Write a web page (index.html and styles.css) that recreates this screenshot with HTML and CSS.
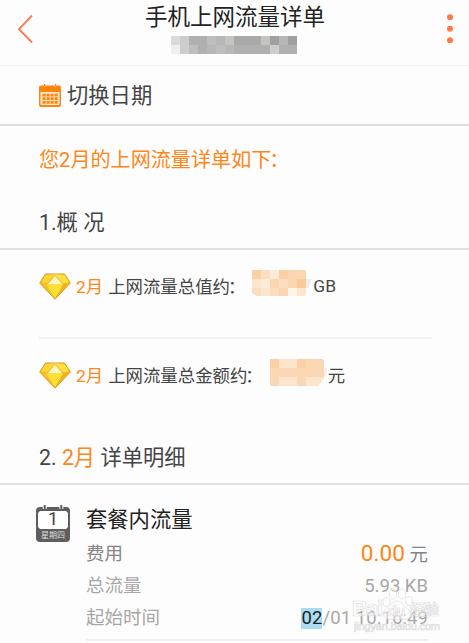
FILE: index.html
```html
<!DOCTYPE html>
<html lang="zh-CN">
<head>
  <meta charset="UTF-8">
  <title>手机上网流量详单</title>
  <link rel="stylesheet" href="styles.css">
</head>
<body>
  <header class="topbar">
    <svg class="back" width="18" height="32" viewBox="0 0 18 32"><path d="M15 2.5 2 16.2 15 29.5" fill="none" stroke="#ff7950" stroke-width="1.9"/></svg>
    <div class="heading">
      <h1>手机上网流量详单</h1>
      <svg class="phone" width="126" height="18" viewBox="0 0 14 2" shape-rendering="crispEdges">
        <path fill="#b0b0b0" d="M0 0h14v2H0z"/>
        <path fill="#dadada" d="M0 0h1v1H0z"/><path fill="#efefef" d="M0 1h1v1H0z"/>
        <path fill="#cdcdcd" d="M1 0h1v2H1zM11 1h1v1h-1z"/>
        <path fill="#bebebe" d="M2 1h1v1H2zM4 0h1v1H4zM5 1h1v1H5z"/>
        <path fill="#c4c4c1" d="M6 0h1v1H6zM10 0h1v1h-1z"/>
        <path fill="#b7b7b7" d="M5 0h1v1H5zM4 1h1v1H4zM6 1h1v1H6zM12 0h1v1h-1z"/>
        <path fill="#a9a9a9" d="M7 0h3v1H7z"/>
        <path fill="#a0a09f" d="M11 0h1v1h-1zM13 0h1v1h-1z"/>
      </svg>
    </div>
    <svg class="more" width="6" height="30" viewBox="0 0 6 30" fill="#ff7a45"><circle cx="3" cy="3.3" r="3"/><circle cx="3" cy="14.7" r="3"/><circle cx="3" cy="26.3" r="3"/></svg>
  </header>

  <div class="switch">
    <svg width="22" height="23" viewBox="0 0 22 23">
      <path d="M2 1.5h2.5Q5.7 3.5 7 1.5h8q1.3 2 2.5 0H20a2 2 0 0 1 2 2V21a2 2 0 0 1-2 2H2a2 2 0 0 1-2-2V3.5a2 2 0 0 1 2-2z" fill="#ff850d"/>
      <path d="M5.7 0v2M16.500 0v2" stroke="#ff850d" stroke-width="1.4"/>
      <path d="M1.500 8h19V20a1 1 0 0 1-1 1h-17a1 1 0 0 1-1-1z" fill="#ffe9d0"/>
      <path d="M3.500 11.100h15.300M3.500 14.700h15.300M3.500 18.300h15.300" stroke="#ff850d" stroke-width="2.7" stroke-dasharray="3.2 .8"/>
    </svg>
    <span>切换日期</span>
  </div>

  <p class="notice">您2月的上网流量详单如下<span class="colon">：</span></p>
  <h2 class="overview">1.概 况</h2>

  <div class="summary">
    <div class="item">
      <svg class="gem" width="32" height="27" viewBox="0 0 32 27">
        <path d="M6.500 1h19L31.300 10 16 26.200.700 10z" fill="#f5bf25" stroke="#d99b1c"/>
        <path d="M7 2h18L16 1.500z" fill="#fff09a"/>
        <path d="M6.500 2 2 9.500 8 10 16 2z" fill="#fbd535"/>
        <path d="M25.500 2 30 9.500 24 10 16 2z" fill="#ffe13f"/>
        <path d="M16 3 8.500 11.500h15z" fill="#fff7c2"/>
        <path d="M7 11.500h18L16 25z" fill="#ffe033"/>
        <path d="M24.500 11 30 10 16 25.500z" fill="#efae24"/>
      </svg>
      <b>2月</b><span>上网流量总值约<span class="colon">：</span></span>
      <svg class="hidden-value" width="60" height="26" viewBox="0 0 60 26" shape-rendering="crispEdges">
        <path d="M54 9h6l-3 9h-3z" fill="#eee"/>
        <path d="M0 0h54v24l-2 2H7q-5 0-7-4z" fill="#fbdec0"/>
        <path d="M0 0h9v9H0zM27 0h9v9h-9z" fill="#fbd0a3"/>
        <path d="M18 0h9v9h-9zM9 9h9v9H9z" fill="#fdebd9"/>
        <path d="M45 9h9v9h-9z" fill="#facb96"/>
        <path d="M18 9h9v9h-9zM36 9h9v9h-9zM27 18h9v8h-9zM36 0h18v9H36z" fill="#fbd7b1"/>
        <path d="M36 18h9v8h-9z" fill="#fff4e7"/><path d="M45 18h9v6l-2 2h-7zM9 18h9v8H9zM0 9h9v9H0z" fill="#fce6cf"/>
      </svg>
      <span>GB</span>
    </div>
    <div class="item">
      <svg class="gem" width="32" height="27" viewBox="0 0 32 27">
        <path d="M6.500 1h19L31.300 10 16 26.200.700 10z" fill="#f5bf25" stroke="#d99b1c"/>
        <path d="M7 2h18L16 1.500z" fill="#fff09a"/>
        <path d="M6.500 2 2 9.500 8 10 16 2z" fill="#fbd535"/>
        <path d="M25.500 2 30 9.500 24 10 16 2z" fill="#ffe13f"/>
        <path d="M16 3 8.500 11.500h15z" fill="#fff7c2"/>
        <path d="M7 11.500h18L16 25z" fill="#ffe033"/>
        <path d="M24.500 11 30 10 16 25.500z" fill="#efae24"/>
      </svg>
      <b>2月</b><span>上网流量总金额约<span class="colon">：</span></span>
      <svg class="hidden-value" width="57" height="27" viewBox="0 0 57 27" shape-rendering="crispEdges">
        <path d="M54 9h3l-1 8h-2z" fill="#eee"/>
        <path d="M0 0h52l2 2v17l-6 8H0z" fill="#fbd7b3"/>
        <path d="M0 0h9v9H0zM27 0h9v9h-9z" fill="#fbd0a2"/>
        <path d="M9 0h18v9H9zM9 18h18v9H9zM36 18h18v1l-6 8H36z" fill="#fce5cc"/>
      </svg>
      <span>元</span>
    </div>
  </div>

  <h2 class="detail-title">2. <b>2月</b> 详单明细</h2>

  <section class="detail">
    <svg class="day" width="34" height="37" viewBox="0 0 34 37">
      <rect y="2" width="34" height="35" rx="4" fill="#5e5e5e"/>
      <path d="M4 6h26l2 2v14l-2 2H4l-2-2V8z" fill="#fff"/>
      <path d="M8.700 1v3M25.300 1v3" stroke="#fff" stroke-width="4"/>
      <path d="M8.700 0v4.500M25.300 0v4.500" stroke="#5e5e5e" stroke-width="2"/>
      <text x="17" y="20" class="day-number">1</text>
      <text x="17" y="33" class="day-name">星期四</text>
    </svg>
    <div class="record">
      <h3>套餐内流量</h3>
      <div class="line cost"><span>费用</span><span><b>0.00</b> 元</span></div>
      <div class="line"><span>总流量</span><span>5.93 KB</span></div>
      <div class="line"><span>起始时间</span><span class="time"><mark>02</mark>/01 10:16:49</span></div>
    </div>
  </section>

  <svg class="watermark" width="94" height="46" viewBox="0 0 94 46">
    <g fill="#fff" fill-opacity=".5" stroke="#ddd" stroke-width=".7">
      <text x="2" y="28" class="brand" textLength="31">Bai</text>
      <ellipse cx="36.500" cy="14" rx="3.500" ry="4.500"/><ellipse cx="43" cy="6" rx="3.700" ry="5"/><ellipse cx="52" cy="6" rx="3.700" ry="5"/><ellipse cx="59" cy="13" rx="3.500" ry="4.500"/>
      <path d="M47 13c-5 0-7 6-12 9-4 4-1 9 4 9h17c5 0 7-5 3-9-5-3-7-9-12-9z"/>
      <text x="38" y="28" class="du">du</text>
      <text x="60" y="27" class="brand-cn" textLength="29">经验</text>
      <text x="4" y="42" class="site" textLength="86">jingyan.baidu.com</text>
    </g>
  </svg>
</body>
</html>
```
FILE: styles.css
```css
* {
  box-sizing: border-box;
}
body {
  margin: 0;
  height: 643px;
  overflow: hidden;
  position: relative;
  background: #fdfdfd;
  color: #444;
  font-family: Roboto, "Noto Sans CJK SC", sans-serif;
}
h1, h2, h3, p {
  margin: 0;
  font-weight: 400;
}
b {
  font-weight: 400;
  color: #ff8617;
}
svg {
  display: block;
  flex: none;
}
.topbar {
  height: 66px;
  display: flex;
  padding: 0 16px 0 17px;
  border-bottom: 1px solid #eee;
}
.back {
  margin-top: 13px;
}
.more {
  margin: 14px 0 0 auto;
}
.heading {
  width: 180px;
  margin-left: 110px;
}
h1 {
  height: 36px;
  line-height: 34px;
  font-size: 22.5px;
  color: #222;
  white-space: nowrap;
}
.phone {
  margin-left: 26px;
}
.switch {
  height: 60px;
  display: flex;
  align-items: center;
  gap: 6px;
  padding: 0 0 4px 39px;
  border-bottom: 2px solid #dedede;
  font-size: 21.3px;
}
.switch svg {
  margin-top: 4px;
}
.notice {
  height: 68px;
  line-height: 69px;
  padding-left: 39px;
  color: #ff8617;
  font-size: 20.1px;
}
.colon {
  display: inline-block;
  text-indent: -2px;
}
h2 {
  padding-left: 39px;
  font-size: 21.3px;
  border-bottom: 2px solid #e0e0e0;
}
.overview {
  height: 56px;
  line-height: 57px;
}
.summary {
  padding: 0 37px 0 39px;
}
.item {
  height: 89px;
  display: flex;
  align-items: center;
  padding-bottom: 16px;
  font-size: 17.4px;
  white-space: nowrap;
}
.item:first-child {
  border-bottom: 2px solid #f1f1f1;
}
.item:last-child {
  height: 90px;
  padding-bottom: 19px;
}
.gem {
  margin-top: 2px;
}
.item b {
  margin: 0 5px;
}
.hidden-value {
  margin: -5px 1px 0 7px;
}
.detail-title {
  height: 56px;
  line-height: 58px;
}
.detail {
  display: flex;
  padding: 20px 41px 0 36px;
  gap: 16px;
}
.record {
  flex: 1;
  height: 136px;
  border-bottom: 2px solid #eee;
}
h3 {
  height: 33px;
  line-height: 29px;
  font-size: 21.3px;
  color: #222;
}
.line {
  display: flex;
  justify-content: space-between;
  height: 32px;
  line-height: 32px;
  font-size: 18.5px;
  color: #a7a7a7;
}
.cost {
  color: #858585;
}
.cost b {
  font-size: 22.6px;
}
.time {
  letter-spacing: .1px;
}
mark {
  display: inline-block;
  height: 21px;
  line-height: 21px;
  background: #a8ddf2;
  color: #222;
}
.day-number {
  font: 18px Roboto, sans-serif;
  fill: #444;
  text-anchor: middle;
}
.day-name {
  font: 8px "Noto Sans CJK SC", sans-serif;
  fill: #ddd;
  text-anchor: middle;
}
.watermark {
  position: absolute;
  left: 350px;
  top: 588px;
}
.brand {
  font: bold 22px "Liberation Sans", sans-serif;
}
.du {
  font: bold 14px "Liberation Sans", sans-serif;
}
.brand-cn {
  font: bold 15px "Noto Sans CJK SC", sans-serif;
}
.site {
  font: 11px "Liberation Sans", sans-serif;
}
```
